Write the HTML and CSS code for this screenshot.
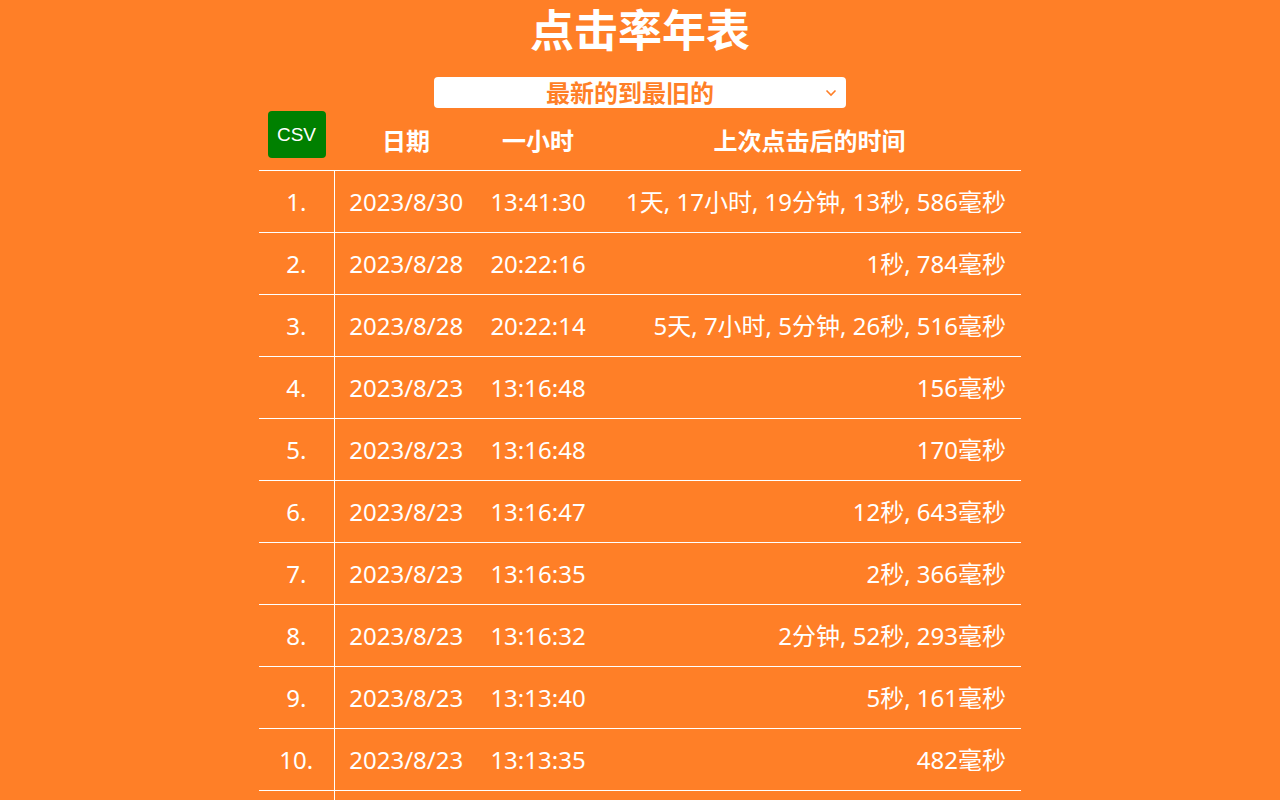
FILE: index.html
```html
<!DOCTYPE html>
<html lang="zh-CN">
<head>
  <meta charset="UTF-8" />
  <title>点击率年表</title>
  <link rel="stylesheet" href="styles.css">
</head>
<body>

  <h1 class="title">点击率年表</h1>

  <!-- Sort order -->
  <div class="sort-wrap">
    <select id="sortOrder" class="sort-select">
      <option>最新的到最旧的</option>
      <option>最旧的到最新的</option>
    </select>
    <svg class="sort-arrow" width="12" height="8" viewBox="0 0 12 8">
      <path d="M1.5 1.5 L6 6 L10.5 1.5" fill="none" stroke="#ff7f27" stroke-width="1.6" />
    </svg>
  </div>

  <!-- Click history -->
  <table class="clicks">
    <colgroup>
      <col class="col-num">
      <col class="col-date">
      <col class="col-time">
      <col class="col-since">
    </colgroup>
    <thead>
      <tr>
        <th class="csv-cell"><button class="csv-btn">CSV</button></th>
        <th>日期</th>
        <th>一小时</th>
        <th>上次点击后的时间</th>
      </tr>
    </thead>
    <tbody>
      <tr><td class="num">1.</td><td>2023/8/30</td><td>13:41:30</td><td class="since">1天, 17小时, 19分钟, 13秒, 586毫秒</td></tr>
      <tr><td class="num">2.</td><td>2023/8/28</td><td>20:22:16</td><td class="since">1秒, 784毫秒</td></tr>
      <tr><td class="num">3.</td><td>2023/8/28</td><td>20:22:14</td><td class="since">5天, 7小时, 5分钟, 26秒, 516毫秒</td></tr>
      <tr><td class="num">4.</td><td>2023/8/23</td><td>13:16:48</td><td class="since">156毫秒</td></tr>
      <tr><td class="num">5.</td><td>2023/8/23</td><td>13:16:48</td><td class="since">170毫秒</td></tr>
      <tr><td class="num">6.</td><td>2023/8/23</td><td>13:16:47</td><td class="since">12秒, 643毫秒</td></tr>
      <tr><td class="num">7.</td><td>2023/8/23</td><td>13:16:35</td><td class="since">2秒, 366毫秒</td></tr>
      <tr><td class="num">8.</td><td>2023/8/23</td><td>13:16:32</td><td class="since">2分钟, 52秒, 293毫秒</td></tr>
      <tr><td class="num">9.</td><td>2023/8/23</td><td>13:13:40</td><td class="since">5秒, 161毫秒</td></tr>
      <tr><td class="num">10.</td><td>2023/8/23</td><td>13:13:35</td><td class="since">482毫秒</td></tr>
      <tr><td class="num">11.</td><td>2023/8/23</td><td>13:13:34</td><td class="since">3秒, 208毫秒</td></tr>
    </tbody>
  </table>

</body>
</html>
```

FILE: styles.css
```css
* { box-sizing: border-box; }
html, body {
  margin: 0;
  padding: 0;
  background: #ff7f27;
  color: #fff;
  font-family: "Noto Sans", "Noto Sans CJK SC", sans-serif;
}

/* TITLE */
.title {
  margin: 0;
  text-align: center;
  font-size: 44px;
  line-height: 60px;
  font-weight: bold;
}

/* SORT SELECT */
.sort-wrap {
  position: relative;
  width: 412px;
  margin: 17px auto 2px;
}

.sort-select {
  display: block;
  width: 100%;
  height: 31px;
  padding: 0 20px 0 0;
  border: none;
  border-radius: 4px;
  background: #fff;
  color: #ff7f27;
  font-family: inherit;
  font-size: 24px;
  font-weight: bold;
  line-height: 31px;
  text-align: center;
  text-align-last: center;
  appearance: none;
  -webkit-appearance: none;
  outline: none;
}

.sort-arrow {
  position: absolute;
  right: 9px;
  top: 12px;
  pointer-events: none;
}

/* TABLE */
.clicks {
  width: 762px;
  margin: 0 auto;
  border-collapse: collapse;
  table-layout: fixed;
}

.col-num { width: 75px; }
.col-date { width: 144px; }
.col-time { width: 120px; }
.col-since { width: 423px; }

.clicks th {
  padding: 15px 0 13px;
  font-size: 24px;
  line-height: 32px;
  font-weight: bold;
  text-align: center;
  border-bottom: 1px solid #fff;
}

.clicks th.csv-cell {
  padding: 1px 0 0;
  vertical-align: top;
}

.csv-btn {
  width: 58px;
  height: 47px;
  padding: 0;
  border: none;
  border-radius: 4px;
  background: #008000;
  color: #fff;
  font-family: "Liberation Sans", Arial, sans-serif;
  font-size: 19px;
  cursor: pointer;
}

.clicks td {
  padding: 15px 0;
  font-size: 24px;
  line-height: 31px;
  text-align: center;
  white-space: nowrap;
  border-bottom: 1px solid #fff;
}

.clicks td.num {
  border-right: 1px solid #fff;
}

.clicks td.since {
  padding-right: 15px;
  text-align: right;
}
```
